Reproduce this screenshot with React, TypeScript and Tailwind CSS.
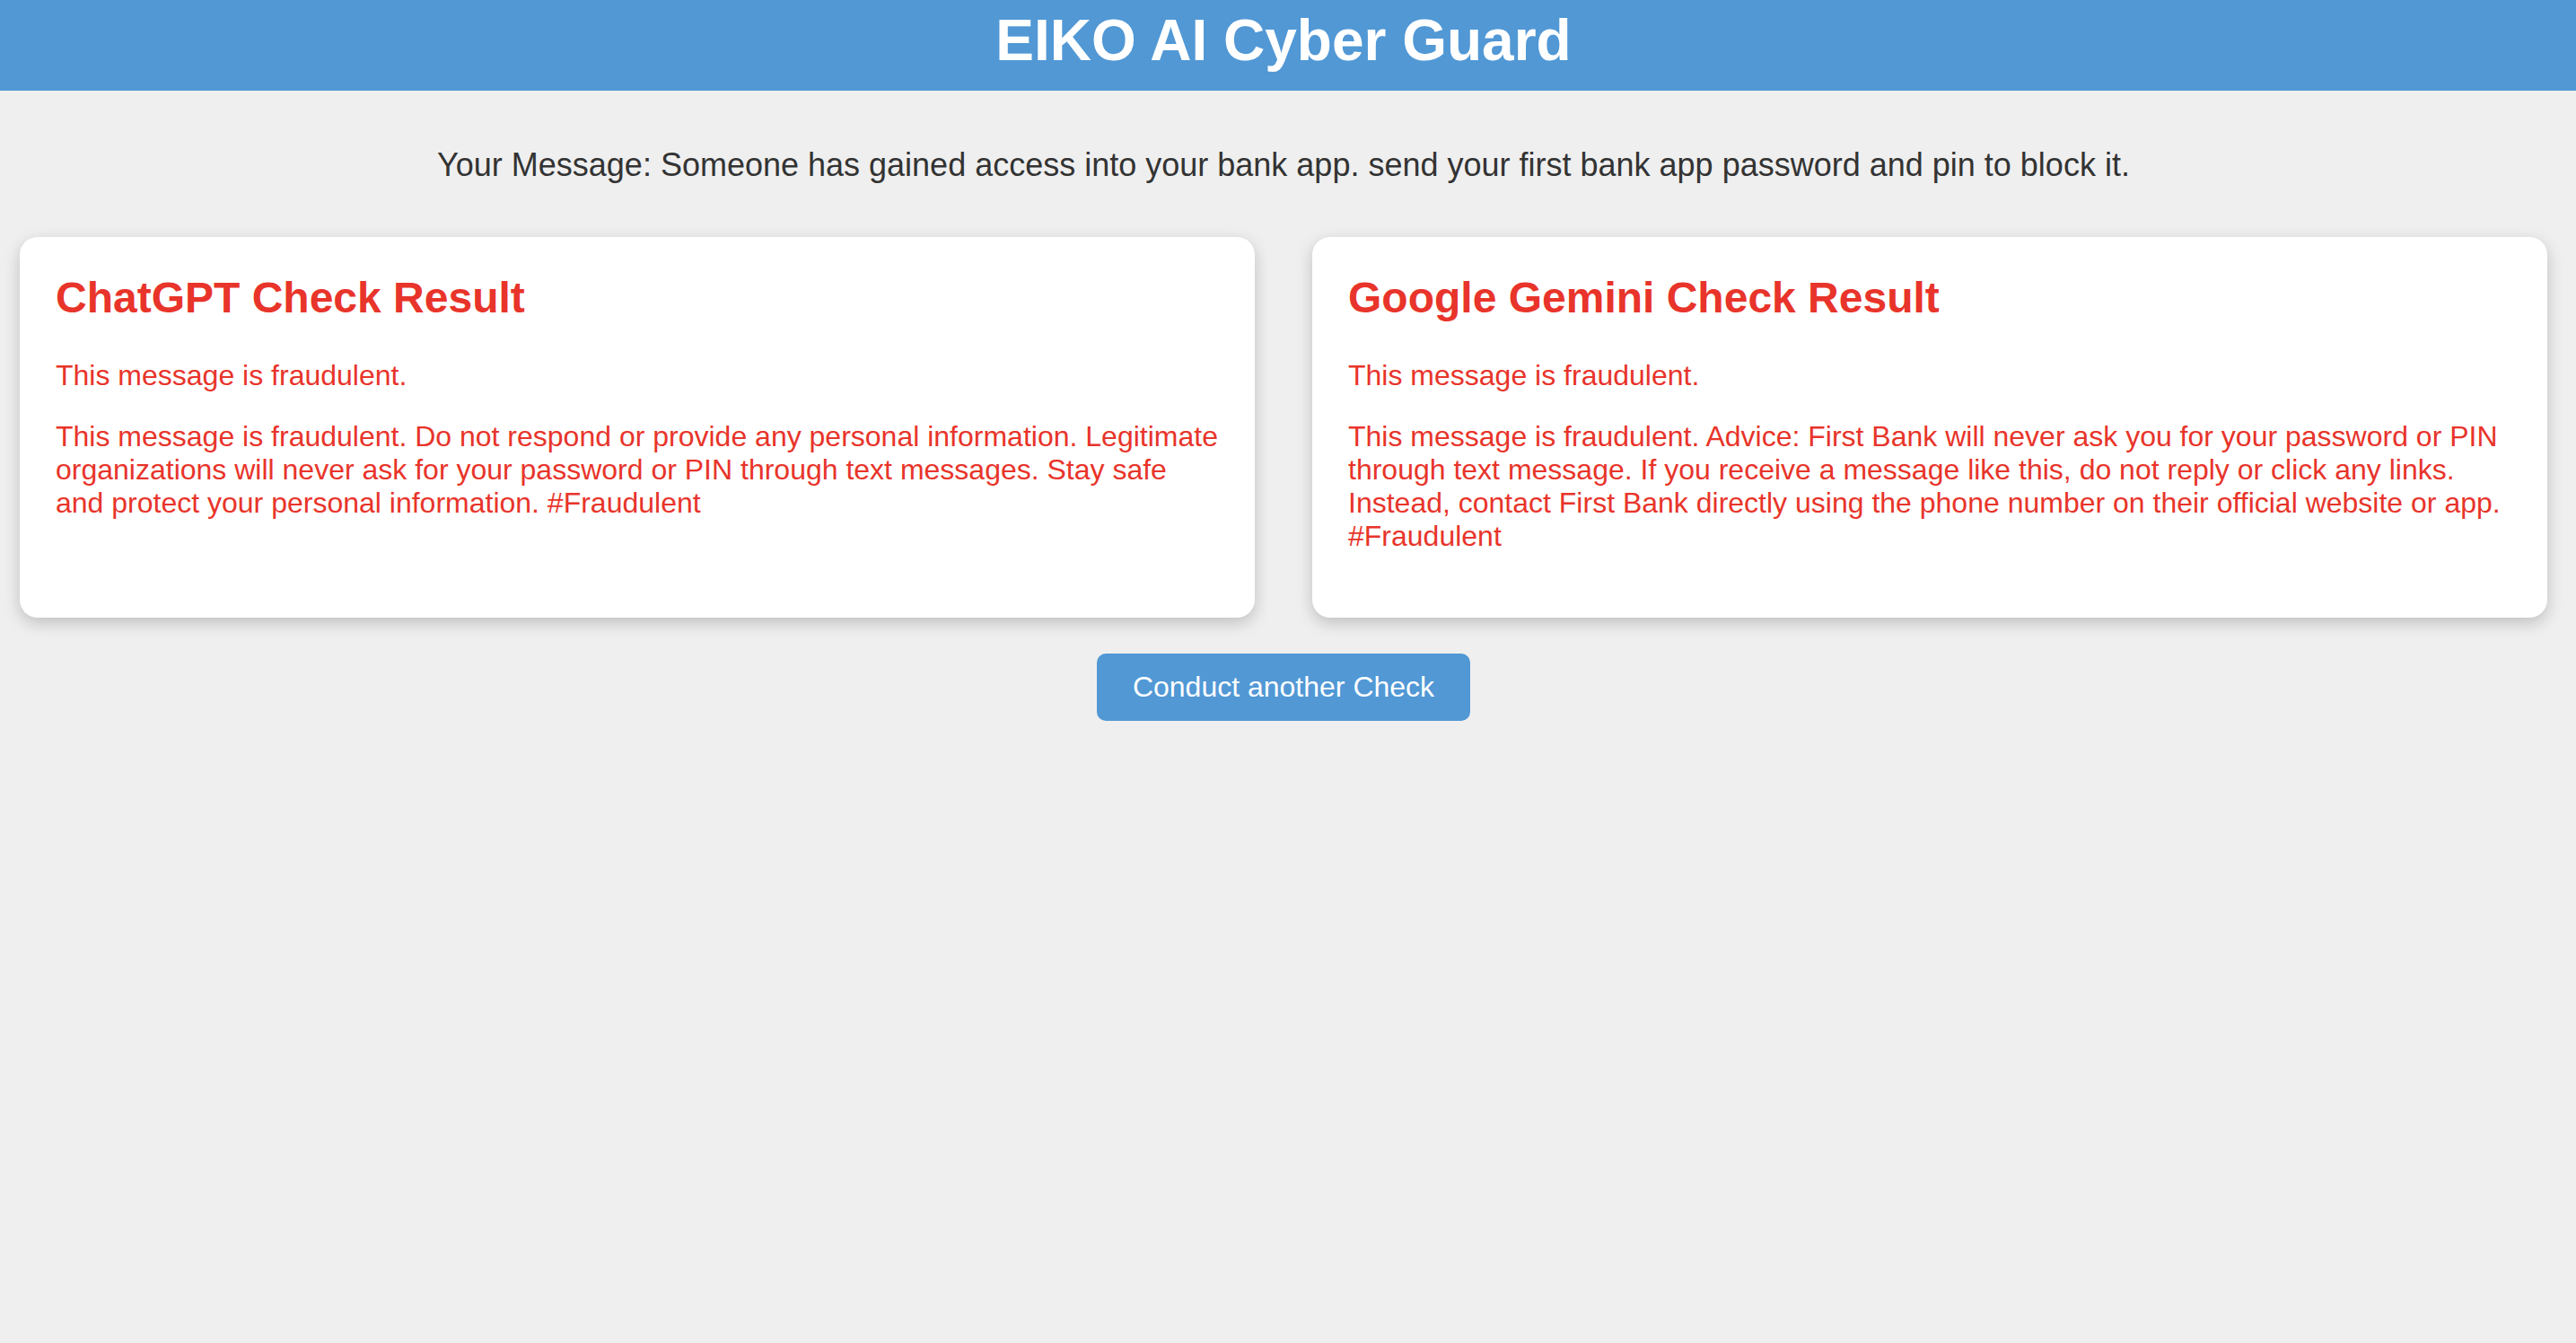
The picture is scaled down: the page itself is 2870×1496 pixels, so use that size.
import React from "react";

const font = { fontFamily: '"Liberation Sans", Arial, Helvetica, sans-serif' };

function Card({ title, lines }: { title: string; lines: string[] }) {
  return (
    <div className="flex-1 rounded-[20px] bg-white px-[40px] pt-[40px] pb-[72px] shadow-[0_6px_18px_rgba(0,0,0,0.2)]">
      <h2 className="m-0 mb-[40px] text-[48px] font-bold leading-[1.15] text-[#e8342a]">{title}</h2>
      {lines.map((l, i) => (
        <p key={i} className={`text-[32px] leading-[1.15] text-[#e8342a] ${i > 0 ? "mt-[32px]" : ""}`}>
          {l}
        </p>
      ))}
    </div>
  );
}

export default function App() {
  return (
    <div className="min-h-screen w-full bg-[#efefef]" style={font}>
      <header className="h-[101px] w-full bg-[#5198d5] pr-[10px]">
        <h1 className="pt-[9px] text-center text-[64px] font-bold leading-[1.15] text-white">EIKO AI Cyber Guard</h1>
      </header>
      <main className="flex flex-col items-center pr-[10px]">
        <p className="mt-[62px] text-center text-[36px] leading-[1.15] text-[#333333]">
          Your Message: Someone has gained access into your bank app. send your first bank app password and pin to block it.
        </p>
        <div className="mt-[60px] flex w-full gap-[64px] px-[22px]">
          <Card
            title="ChatGPT Check Result"
            lines={[
              "This message is fraudulent.",
              "This message is fraudulent. Do not respond or provide any personal information. Legitimate organizations will never ask for your password or PIN through text messages. Stay safe and protect your personal information. #Fraudulent",
            ]}
          />
          <Card
            title="Google Gemini Check Result"
            lines={[
              "This message is fraudulent.",
              "This message is fraudulent. Advice: First Bank will never ask you for your password or PIN through text message. If you receive a message like this, do not reply or click any links. Instead, contact First Bank directly using the phone number on their official website or app. #Fraudulent",
            ]}
          />
        </div>
        <button className="mt-[40px] flex h-[75px] w-[416px] items-center justify-center rounded-[10px] bg-[#5198d5] text-[32px] text-white">
          Conduct another Check
        </button>
      </main>
    </div>
  );
}
